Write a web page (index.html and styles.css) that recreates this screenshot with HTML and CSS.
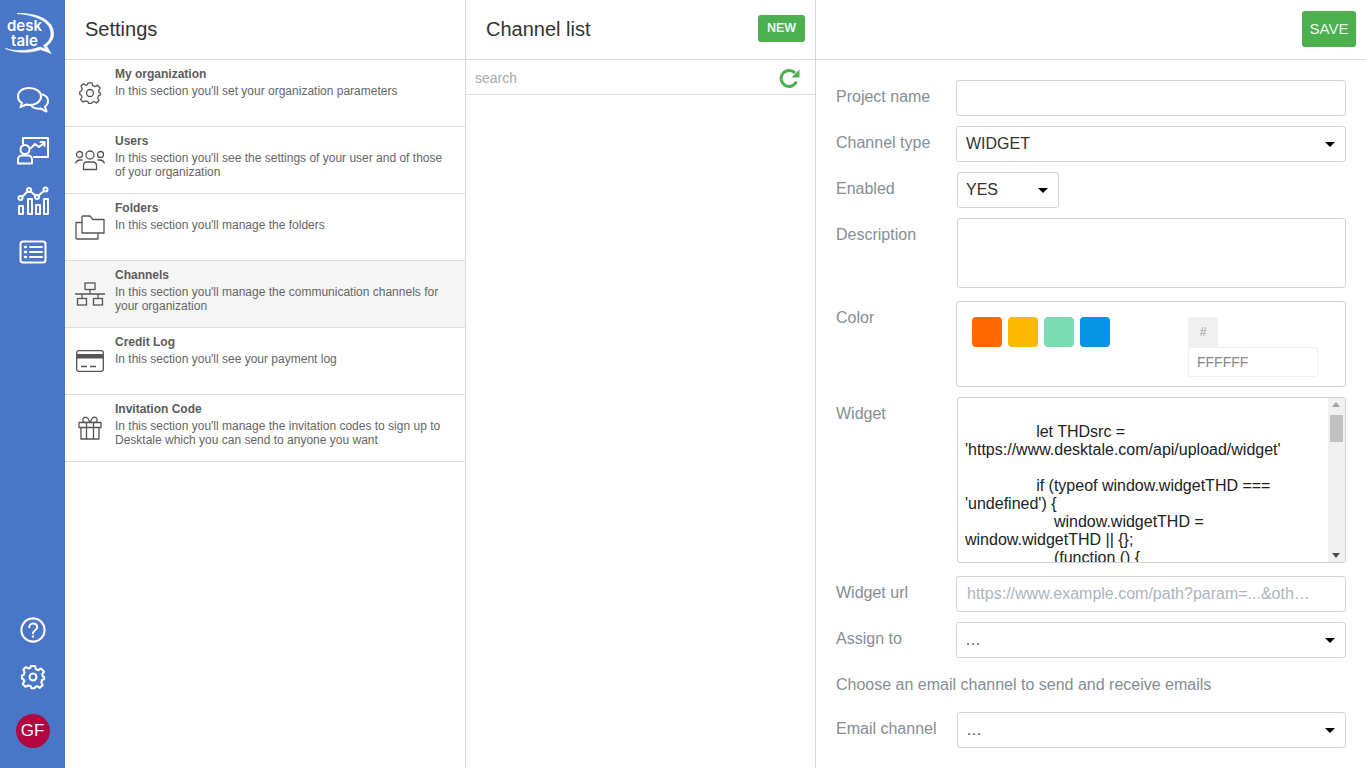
FILE: index.html
```html
<!DOCTYPE html>
<html lang="en">
<head>
<meta charset="utf-8">
<title>Settings</title>
<link rel="stylesheet" href="styles.css">
</head>
<body>
<div class="app">
  <nav class="rail">
    <div class="logo">
      <svg class="logo-bubble" width="52" height="44" viewBox="0 0 52 44" fill="none"><path d="M13 1.500 C32 1 49 7 49.500 21 C49.800 27 46.500 31 42.500 34 L47 41.500 C43 39.500 39 38.500 36.500 37.500 C26 41.500 11 41 1.500 36.500 C10 39.500 25 39.500 36 35 C38.500 36 40 36.500 42 37.500 L39.500 33.500 C44.500 30.500 47 26.500 47 21 C46.500 9 30 2.500 13 1.500 Z" fill="#fff" stroke="#fff" stroke-width="0.700" stroke-linejoin="round"/></svg>
      <span class="logo-text">desk<br>tale</span>
    </div>
    <div class="rail-icons">
      <svg width="34" height="28" viewBox="0 0 34 28" fill="none" stroke="#fff" stroke-width="2" stroke-linejoin="round" stroke-linecap="round"><path d="M13 2 C6 2 2 6 2 10.500 C2 13.500 4 16 6 17 L4.500 21 L10.500 18.500 C11.500 18.800 12.300 19 13.500 19 C20 19 25 15.500 25 10.500 C25 5.500 20 2 13 2 Z"/><path d="M26.500 8.500 C30 9.500 32 12 32 15 C32 17.500 30.500 19.500 29 20.500 L30.500 25.500 L24.500 22.500 C20.500 23 16.500 21.500 14.500 19"/></svg>
      <svg width="34" height="30" viewBox="0 0 34 30" fill="none" stroke="#fff" stroke-width="2" stroke-linejoin="round" stroke-linecap="round"><path d="M7 9 V3 H32 V22 H18"/><circle cx="9" cy="14.500" r="4.500"/><path d="M2 28.500 V24.500 C2 22 4 20.500 6 20.500 H12 C14 20.500 16 22 16 24.500 V28.500 Z"/><path d="M15 13 L19 9 L23 12 L28 8 M24.500 7 H28.500 V11"/></svg>
      <svg width="32" height="30" viewBox="0 0 32 30" fill="none" stroke="#fff" stroke-width="2" stroke-linejoin="round"><rect x="2" y="20" width="4" height="8"/><rect x="11" y="13" width="4" height="15"/><rect x="19" y="19" width="4" height="9"/><rect x="27" y="13" width="4" height="15"/><path d="M4 12 L12 4 L20 11 L28 4"/><circle cx="3.500" cy="12" r="2" fill="#4a76c8"/><circle cx="12" cy="4" r="2" fill="#4a76c8"/><circle cx="20" cy="11" r="2" fill="#4a76c8"/><circle cx="28.500" cy="3.500" r="2" fill="#4a76c8"/></svg>
      <svg class="icon-list" width="28" height="24" viewBox="0 0 28 24" fill="none" stroke="#fff" stroke-width="2" stroke-linecap="round"><rect x="1.500" y="1.500" width="25" height="21" rx="2.500"/><path d="M11 7 H23 M11 12 H23 M11 17 H23"/><path d="M6 7 H7 M6 12 H7 M6 17 H7" stroke-width="2.500"/></svg>
    </div>
    <div class="rail-bottom">
      <svg width="26" height="26" viewBox="0 0 28 28" fill="none" stroke="#fff" stroke-width="2.200" stroke-linecap="round"><circle cx="14" cy="14" r="12.500"/><path d="M10 11 C10 8.500 12 7 14 7 C16.500 7 18.500 8.500 18.500 11 C18.500 14.500 14 14.500 14 17.500"/><path d="M14 21 V21.200" stroke-width="2.500"/></svg>
      <svg width="26" height="26" viewBox="0 0 24 24" fill="none" stroke="#fff" stroke-width="1.900" stroke-linejoin="round"><circle cx="12" cy="12" r="3.200"/><path d="M10 1.800 H14 L14.600 4.700 L17 5.700 L19.500 4.100 L22.200 7 L20.500 9.500 L21.300 11.800 L22.300 12 V14 L20.500 14.600 L19.700 17 L21 19.500 L18.300 22 L16 20.500 L14 21.300 L13.500 22.300 H10.500 L10 20.600 L7.500 19.800 L5 21 L2.500 18.500 L4 16 L3.200 14 L1.800 13.500 V10.500 L3.400 10 L4.200 7.700 L3 5 L5.500 2.800 L8 4.300 L9.500 3.600 Z"/></svg>
      <div class="avatar">GF</div>
    </div>
  </nav>

  <section class="col-settings">
    <header class="head"><h1>Settings</h1></header>
    <ul class="menu">
      <li class="item">
        <span class="item-icon"><svg width="24" height="24" viewBox="0 0 24 24" fill="none" stroke="#555" stroke-width="1.300" stroke-linejoin="round"><circle cx="12" cy="12" r="3.500"/><path d="M10 1.800 H14 L14.600 4.700 L17 5.700 L19.500 4.100 L22.200 7 L20.500 9.500 L21.300 11.800 L22.300 12 V14 L20.500 14.600 L19.700 17 L21 19.500 L18.300 22 L16 20.500 L14 21.300 L13.500 22.300 H10.500 L10 20.600 L7.500 19.800 L5 21 L2.500 18.500 L4 16 L3.200 14 L1.800 13.500 V10.500 L3.400 10 L4.200 7.700 L3 5 L5.500 2.800 L8 4.300 L9.500 3.600 Z"/></svg></span>
        <div class="item-text"><h2>My organization</h2><p>In this section you'll set your organization parameters</p></div>
      </li>
      <li class="item">
        <span class="item-icon"><svg width="30" height="22" viewBox="0 0 30 22" fill="none" stroke="#555" stroke-width="1.300" stroke-linecap="round"><circle cx="15" cy="6" r="4"/><circle cx="4.500" cy="5.500" r="3"/><circle cx="25.500" cy="5.500" r="3"/><path d="M8.500 20.500 V17 C8.500 14.500 10 13 12 13 H18 C20 13 21.500 14.500 21.500 17 V20.500 Z"/><path d="M0.700 14 C1.500 12 3 11 5 11 H7 M29.300 14 C28.500 12 27 11 25 11 H23"/></svg></span>
        <div class="item-text"><h2>Users</h2><p>In this section you'll see the settings of your user and of those of your organization</p></div>
      </li>
      <li class="item">
        <span class="item-icon"><svg width="30" height="25" viewBox="0 0 30 25" fill="none" stroke="#555" stroke-width="1.300" stroke-linejoin="round"><path d="M7 18 V2 C7 1.300 7.500 1 8 1 H15 L18 4.500 H29 V18 Z"/><path d="M7 7.500 H1 V23 C1 23.500 1.500 24 2 24 H23 V18"/></svg></span>
        <div class="item-text"><h2>Folders</h2><p>In this section you'll manage the folders</p></div>
      </li>
      <li class="item active">
        <span class="item-icon"><svg width="30" height="24" viewBox="0 0 30 24" fill="none" stroke="#555" stroke-width="1.300"><rect x="10" y="1" width="10" height="6.500"/><path d="M15 7.500 V12 M0 12 H30 M7 12 V16 M23 12 V16"/><rect x="2.500" y="16.500" width="9" height="6.500"/><rect x="18.500" y="16.500" width="9" height="6.500"/></svg></span>
        <div class="item-text"><h2>Channels</h2><p>In this section you'll manage the communication channels for your organization</p></div>
      </li>
      <li class="item">
        <span class="item-icon"><svg width="28" height="22" viewBox="0 0 28 22" fill="none" stroke="#555" stroke-width="1.300"><rect x="0.700" y="0.700" width="26.600" height="20.600" rx="2"/><rect x="1" y="4" width="26" height="4.500" fill="#555" stroke="none"/><path d="M5 16.500 H11 M14 16.500 H20"/></svg></span>
        <div class="item-text"><h2>Credit Log</h2><p>In this section you'll see your payment log</p></div>
      </li>
      <li class="item">
        <span class="item-icon"><svg width="24" height="24" viewBox="0 0 24 24" fill="none" stroke="#555" stroke-width="1.300" stroke-linejoin="round"><rect x="1" y="6.500" width="22" height="5"/><path d="M3 11.500 V23 H21 V11.500 M8.500 6.500 V23 M15.500 6.500 V23"/><path d="M8.500 6.500 C5 6.500 4.500 4.500 5 3 C6 0.500 9 1 10 2.500 L12 6.500 L14 2.500 C15 1 18 0.500 19 3 C19.500 4.500 19 6.500 15.500 6.500"/></svg></span>
        <div class="item-text"><h2>Invitation Code</h2><p>In this section you'll manage the invitation codes to sign up to Desktale which you can send to anyone you want</p></div>
      </li>
    </ul>
  </section>

  <section class="col-list">
    <header class="head head-list"><h1>Channel list</h1><button class="btn btn-new">NEW</button></header>
    <div class="search">
      <span class="search-text">search</span>
      <svg width="22" height="20" viewBox="0 0 22 20" fill="none"><path d="M17.500 13.500 A8 8 0 1 1 16 5" stroke="#4caf50" stroke-width="3"/><path d="M20.500 1.500 V9.500 H12.500 Z" fill="#4caf50"/></svg>
    </div>
  </section>

  <section class="col-form">
    <header class="head head-form"><button class="btn btn-save">SAVE</button></header>
    <form class="form">
      <div class="row"><label>Project name</label><div class="field input"></div></div>
      <div class="row"><label>Channel type</label><div class="field input select">WIDGET<i class="caret"></i></div></div>
      <div class="row"><label>Enabled</label><div class="field input select small">YES<i class="caret"></i></div></div>
      <div class="row"><label>Description</label><div class="field input desc"></div></div>
      <div class="row row-color"><label>Color</label>
        <div class="field color-box">
          <div class="swatches"><span class="sw orange"></span><span class="sw yellow"></span><span class="sw green"></span><span class="sw blue"></span></div>
          <div class="hex"><span class="hash">#</span><span class="hex-input">FFFFFF</span></div>
        </div>
      </div>
      <div class="row row-widget"><label>Widget</label>
        <div class="field code-box">
          <div class="code">
                let THDsrc = 'https://www.desktale.com/api/upload/widget'

                if (typeof window.widgetTHD === 'undefined') {
                    window.widgetTHD = window.widgetTHD || {};
                    (function () {</div>
          <div class="scrollbar"><i class="arrow up"></i><b class="thumb"></b><i class="arrow down"></i></div>
        </div>
      </div>
      <div class="row row-url"><label>Widget url</label><div class="field input placeholder">https://www.example.com/path?param=...&amp;oth…</div></div>
      <div class="row"><label>Assign to</label><div class="field input select dots">…<i class="caret"></i></div></div>
      <p class="hint">Choose an email channel to send and receive emails</p>
      <div class="row"><label>Email channel</label><div class="field input select dots">…<i class="caret"></i></div></div>
    </form>
  </section>
</div>
</body>
</html>
```
FILE: styles.css
```css
* { box-sizing: border-box; }
html, body { margin: 0; height: 100%; overflow: hidden; }
body { font-family: "Liberation Sans", Arial, sans-serif; color: #212529; background: #fff; }
h1, h2, p, ul { margin: 0; padding: 0; }
ul { list-style: none; }

.app { display: flex; height: 768px; }

.rail { width: 65px; flex: none; background: #4a76c8; display: flex; flex-direction: column; align-items: center; }
.logo { position: relative; width: 65px; height: 60px; padding: 18px 0 0 0; color: #fff; text-align: center; font: 600 15px/15px "Inter", "Liberation Sans", sans-serif; }
.logo-bubble { position: absolute; left: 4px; top: 12px; }
.logo-text { position: relative; display: block; margin-left: -16px; }
.rail-icons { display: flex; flex-direction: column; align-items: center; gap: 21px; margin-top: 26px; }
.icon-list { margin-top: 3px; }
.rail-bottom { margin-top: auto; display: flex; flex-direction: column; align-items: center; gap: 21px; padding-bottom: 20px; }
.avatar { width: 34px; height: 34px; margin-top: 3px; border-radius: 50%; background: #b1063f; color: #fff; font-size: 17px; line-height: 34px; text-align: center; }

.col-settings { width: 401px; flex: none; border-right: 1px solid #d9d9d9; }
.col-list { width: 350px; flex: none; border-right: 1px solid #d9d9d9; }
.col-form { flex: 1; min-width: 0; }

.head { height: 60px; border-bottom: 1px solid #dedede; display: flex; align-items: center; padding-left: 20px; }
.head h1 { font-size: 20px; font-weight: 400; color: #333; }
.head-list { justify-content: space-between; padding-right: 10px; }
.head-form { justify-content: flex-end; padding-right: 10px; }

.btn { border: 0; border-radius: 3px; background: #4caf50; color: #fff; font-family: inherit; padding: 0; }
.btn-new { width: 47px; height: 27px; font-size: 12.500px; font-weight: 700; margin-top: -3px; color: #eaf7ea; }
.btn-save { width: 54px; height: 36px; font-size: 15px; margin-top: -1px; padding-bottom: 2px; color: #eaf7ea; }

.item { height: 67px; border-bottom: 1px solid #dedede; display: flex; }
.item.active { background: #f6f6f6; }
.item-icon { width: 50px; flex: none; display: flex; justify-content: center; align-items: center; }
.item-text { min-width: 0; padding: 7px 20px 0 0; }
.item-text h2 { font-size: 12px; line-height: 14px; font-weight: 700; color: #5c5c5c; margin-bottom: 3px; }
.item-text p { font-size: 12px; line-height: 14px; color: #666; }

.search { height: 35px; border-bottom: 1px solid #dedede; display: flex; align-items: center; justify-content: space-between; padding: 1px 14px 0 9px; }
.search-text { font-size: 14px; color: #aaa; }

.form { padding: 20px 20px 0; display: flex; flex-direction: column; gap: 10px; }
.row { display: flex; align-items: flex-start; }
.row label { width: 120px; flex: none; font-size: 16px; line-height: 20px; color: #868e96; padding-top: 7px; }
.field { flex: 1; min-width: 0; border: 1px solid #ced4da; border-radius: 3px; background: #fff; }
.input { height: 36px; position: relative; font-size: 16px; line-height: 34px; padding-left: 9px; color: #333; }
.select { padding-right: 30px; }
.dots { color: #555; padding-left: 8px; }
.caret { position: absolute; right: 10px; top: 15px; border: 5px solid transparent; border-top-color: #000; border-bottom: 0; }
.small { flex: none; width: 102px; margin-left: 1px; padding-left: 8px; }
.desc { height: 70px; margin-left: 1px; }
.row-color { margin-top: 3px; }
.color-box { height: 86px; display: flex; padding: 15px 27px 0 15px; justify-content: space-between; }
.swatches { display: flex; gap: 6px; }
.sw { width: 30px; height: 30px; border-radius: 4px; }
.orange { background: #ff6900; }
.yellow { background: #fcb900; }
.green { background: #7bdcb5; }
.blue { background: #0693e3; }
.hex { width: 130px; display: flex; flex-direction: column; align-items: flex-start; }
.hash { width: 30px; height: 30px; background: #f0f0f0; color: #98a1a4; font-size: 12px; line-height: 30px; text-align: center; border-radius: 3px 0 0 3px; }
.hex-input { width: 130px; height: 30px; border: 1px solid #f0f0f0; border-radius: 0 3px 3px 0; color: #888; font-size: 14px; line-height: 28px; padding-left: 8px; }
.code-box { height: 166px; margin-left: 1px; display: flex; overflow: hidden; }
.code { flex: 1; min-width: 0; white-space: pre-wrap; font-size: 16px; line-height: 18px; color: #222; padding: 7px 7px 0; height: 164px; overflow: hidden; }
.scrollbar { width: 17px; flex: none; background: #f1f1f1; position: relative; }
.thumb { position: absolute; left: 2px; top: 17px; width: 13px; height: 27px; background: #c1c1c1; }
.arrow { position: absolute; left: 4px; border: 4px solid transparent; }
.up { top: 4px; border-top: 0; border-bottom: 5px solid #a3a3a3; }
.down { bottom: 4px; border-bottom: 0; border-top: 5px solid #505050; }
.row-url { margin-top: 3px; }
.placeholder { color: #adb5bd; padding-left: 10px; white-space: nowrap; }
.hint { font-size: 16px; line-height: 20px; color: #868e96; padding-top: 7px; height: 34px; }
.hint + .row .field { margin-left: 1px; }
```
